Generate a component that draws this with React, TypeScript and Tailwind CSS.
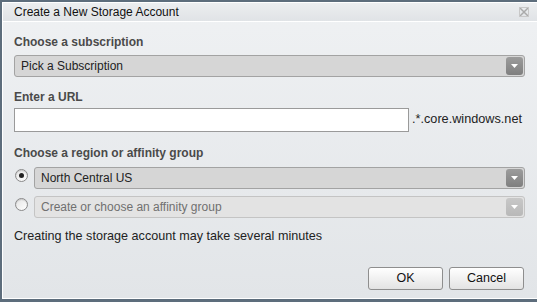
import React from "react";

function Arrow({ disabled }: { disabled?: boolean }) {
  return (
    <div
      className={`my-[1px] mr-[1px] flex h-[18px] w-[17px] items-center justify-center rounded-[3px] ${
        disabled ? "bg-gradient-to-b from-[#c8c8c8] to-[#b8b8b8]" : "bg-gradient-to-b from-[#9c9c9c] to-[#7f7f7f]"
      }`}
    >
      <svg width="7" height="4" viewBox="0 0 7 4">
        <path d="M0 0h7L3.5 4z" fill="#fff" />
      </svg>
    </div>
  );
}

function Select({ label, disabled }: { label: string; disabled?: boolean }) {
  return (
    <div
      className={`flex h-[22px] flex-1 items-center rounded-[3px] border ${
        disabled ? "border-[#c4c4c4] bg-[#e3e3e3] text-[#707070]" : "border-[#a3a3a3] bg-[#d6d6d6] text-[#222]"
      }`}
    >
      <span className="flex-1 pl-[6px] text-[12px] leading-none">{label}</span>
      <Arrow disabled={disabled} />
    </div>
  );
}

function Radio({ checked }: { checked?: boolean }) {
  return (
    <div className="flex h-[13px] w-[13px] items-center justify-center rounded-full border border-[#8a8a8a] bg-gradient-to-br from-[#e4e4e4] to-[#ffffff] shadow-[inset_0_1px_1px_rgba(0,0,0,0.15)]">
      {checked && <div className="h-[5px] w-[5px] rounded-full bg-[#222]" />}
    </div>
  );
}

function Label({ children }: { children: React.ReactNode }) {
  return <h4 className="text-[12px] font-bold leading-none text-[#4a4a4a]">{children}</h4>;
}

function Button({ children }: { children: React.ReactNode }) {
  return (
    <button className="h-[23px] w-[75px] rounded-[3px] border border-[#8e8e8e] bg-gradient-to-b from-[#ffffff] to-[#e3e3e3] text-[12.5px] text-[#111]">
      {children}
    </button>
  );
}

export default function App() {
  return (
    <div
      className="h-[302px] w-[537px] overflow-hidden bg-[#5d6d7c] pl-[2px] pt-[2px] pb-[3px]"
      style={{ fontFamily: '"Liberation Sans", Arial, sans-serif' }}
    >
      <div className="flex h-full flex-col border-l border-t border-b border-white bg-gradient-to-b from-[#eff1f3] to-[#e2e5e8]">
        <div className="flex h-[19px] items-center justify-between border-b border-white bg-gradient-to-b from-[#eceef0] to-[#e0e3e6] pl-[11px] pr-[8px]">
          <span className="text-[12px] text-[#111]">Create a New Storage Account</span>
          <svg width="10" height="10" viewBox="0 0 10 10">
            <path d="M1 1l8 8M9 1l-8 8" stroke="#aaa" strokeWidth="1.5" fill="none" />
            <rect x="0.5" y="0.5" width="9" height="9" fill="none" stroke="#c8c8c8" />
          </svg>
        </div>
        <div className="flex flex-1 flex-col pl-[11px] pr-[12px]">
          <div className="mt-[14px]">
            <Label>Choose a subscription</Label>
          </div>
          <div className="mt-[7px] flex">
            <Select label="Pick a Subscription" />
          </div>
          <div className="mt-[14px]">
            <Label>Enter a URL</Label>
          </div>
          <div className="mt-[5px] flex items-center">
            <input className="h-[24px] w-[395px] border border-[#9a9a9a] bg-white" />
            <span className="ml-[3px] text-[12.7px] text-[#222]">.*.core.windows.net</span>
          </div>
          <div className="mt-[15px]">
            <Label>Choose a region or affinity group</Label>
          </div>
          <div className="mt-[8px] flex items-start gap-[6px]">
            <div className="mt-[2px] pl-[1px]">
              <Radio checked />
            </div>
            <Select label="North Central US" />
          </div>
          <div className="mt-[7px] flex items-start gap-[6px]">
            <div className="mt-[2px] pl-[1px]">
              <Radio />
            </div>
            <Select label="Create or choose an affinity group" disabled />
          </div>
          <p className="mt-[12px] text-[12.6px] leading-none text-[#222]">
            Creating the storage account may take several minutes
          </p>
          <div className="mr-[1px] mt-[24px] flex justify-end gap-[6px]">
            <Button>OK</Button>
            <Button>Cancel</Button>
          </div>
        </div>
      </div>
    </div>
  );
}
